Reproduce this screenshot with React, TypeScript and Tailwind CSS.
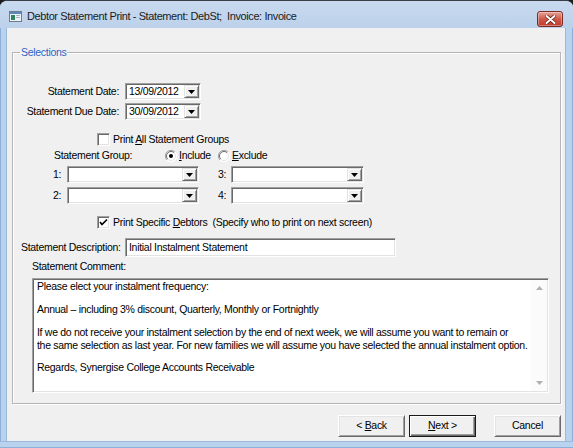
import React from 'react';

const Arrow = () => (
  <svg width="7" height="4" viewBox="0 0 7 4">
    <path d="M0 0h7L3.5 4z" fill="#000" />
  </svg>
);

const DropButton = () => (
  <div className="flex w-[15px] shrink-0 items-center justify-center border border-t-[#e3e3e3] border-l-[#e3e3e3] border-b-[#696969] border-r-[#696969] bg-[#f0f0f0] shadow-[inset_1px_1px_0_#fff,inset_-1px_-1px_0_#a0a0a0]">
    <Arrow />
  </div>
);

const Sunken: React.FC<{ className?: string; children?: React.ReactNode }> = ({ className = '', children }) => (
  <div
    className={`flex border border-t-[#a0a0a0] border-l-[#a0a0a0] border-b-white border-r-white bg-white p-[1px] shadow-[inset_1px_1px_0_#696969,inset_-1px_-1px_0_#e3e3e3] ${className}`}
  >
    {children}
  </div>
);

const Combo: React.FC<{ className?: string; value?: string }> = ({ className = '', value = '' }) => (
  <Sunken className={`h-[17px] ${className}`}>
    <span className="flex-1 pl-[2px] leading-[13px]">{value}</span>
    <DropButton />
  </Sunken>
);

const CheckBox: React.FC<{ checked?: boolean }> = ({ checked }) => (
  <Sunken className="h-[13px] w-[13px] shrink-0 items-center justify-center p-0">
    {checked && (
      <svg width="9" height="9" viewBox="0 0 9 9">
        <path d="M1 4l2 2.5L8 1.5" stroke="#000" strokeWidth="1.6" fill="none" />
      </svg>
    )}
  </Sunken>
);

const Radio: React.FC<{ checked?: boolean }> = ({ checked }) => (
  <svg width="12" height="12" viewBox="0 0 12 12" className="shrink-0">
    <circle cx="6" cy="6" r="5.5" fill="#fff" />
    <path d="M10 2A5.5 5.5 0 0 0 2 10" stroke="#a0a0a0" strokeWidth="1" fill="none" />
    <path d="M9.2 2.8A4.5 4.5 0 0 0 2.8 9.2" stroke="#696969" strokeWidth="1" fill="none" />
    <path d="M2 10A5.5 5.5 0 0 0 10 2" stroke="#fff" strokeWidth="1" fill="none" />
    <path d="M2.8 9.2A4.5 4.5 0 0 0 9.2 2.8" stroke="#e3e3e3" strokeWidth="1" fill="none" />
    {checked && <circle cx="6" cy="6" r="2" fill="#000" />}
  </svg>
);

const Button: React.FC<{ children: React.ReactNode; isDefault?: boolean; className?: string }> = ({
  children,
  isDefault,
  className = '',
}) => (
  <div
    className={`flex h-[22px] w-[67px] items-center justify-center bg-[#f0f0f0] ${
      isDefault
        ? 'border border-[#1a1a1a] shadow-[inset_1px_1px_0_#fff,inset_-1px_-1px_0_#696969,inset_-2px_-2px_0_#a0a0a0]'
        : 'border border-t-white border-l-white border-b-[#696969] border-r-[#696969] shadow-[inset_1px_1px_0_#e3e3e3,inset_-1px_-1px_0_#a0a0a0]'
    } ${className}`}
  >
    {children}
  </div>
);

const WindowIcon = () => (
  <svg width="13" height="11" viewBox="0 0 13 11">
    <rect x="0.5" y="0.5" width="12" height="10" fill="#eef2f6" stroke="#6d7d8e" />
    <rect x="1" y="1" width="11" height="2" fill="#5f87b8" />
    <rect x="2" y="4" width="4" height="5" fill="#2f8560" />
    <rect x="7" y="4" width="4" height="1" fill="#a8b4c0" />
    <rect x="7" y="6" width="4" height="1" fill="#a8b4c0" />
  </svg>
);

const CloseButton = () => (
  <div className="mr-[10px] mt-[10px] flex h-[16px] w-[26px] items-center justify-center self-start rounded-[3px] border border-[#7d2a22] bg-gradient-to-b from-[#e4a297] via-[#cf5a4a] to-[#bd3a2a] shadow-[inset_0_0_0_1px_rgba(255,255,255,0.35)]">
    <svg width="11" height="9" viewBox="0 0 11 9">
      <path d="M1.5 1l8 7M9.5 1l-8 7" stroke="#5a1a12" strokeWidth="3.4" strokeLinecap="round" />
      <path d="M1.5 1l8 7M9.5 1l-8 7" stroke="#fff" strokeWidth="2" strokeLinecap="round" />
    </svg>
  </div>
);

export default function App() {
  return (
    <div className="h-[448px] w-[573px] overflow-hidden whitespace-nowrap bg-[#1c1c1c] font-['Liberation_Sans',Arial,sans-serif] text-[10.5px] tracking-[-0.3px] text-black">
      <div className="flex h-full w-full flex-col overflow-hidden rounded-t-[7px] border-t border-[#3b3f45] bg-[#b6cde9]">
        {/* title bar */}
        <div className="flex h-[27px] shrink-0 bg-gradient-to-b from-[#c9daef] to-[#bcd1ea]">
          <div className="flex flex-1 items-center gap-[5px] pl-[9px] pt-[3px]">
            <WindowIcon />
            <span className="text-[11px] tracking-[-0.4px] text-[#1b1b1b]">
              Debtor Statement Print - Statement: DebSt;&nbsp; Invoice: Invoice
            </span>
          </div>
          <CloseButton />
        </div>

        <div className="flex flex-1">
          <div className="w-[7px] border-l border-r border-l-[#8eb0d8] border-r-[#9cb9dc] bg-[#b9d2ee]" />

          {/* client area */}
          <div className="flex flex-1 flex-col bg-[#f0f0f0] pl-[5px] pr-[4px] pt-[18px]">
            <fieldset className="border border-[#b5b5b5] pb-[10px] shadow-[inset_1px_1px_0_#fff,1px_1px_0_#fff]">
              <legend className="ml-[7px] px-[1px] leading-[12px] text-[#2a63c6]">Selections</legend>

              <div className="mt-[25px] flex h-[17px] items-center">
                <span className="w-[106px] text-right">Statement Date:</span>
                <Combo className="ml-[6px] w-[76px]" value="13/09/2012" />
              </div>
              <div className="mt-[3px] flex h-[17px] items-center">
                <span className="w-[106px] text-right">Statement Due Date:</span>
                <Combo className="ml-[6px] w-[76px]" value="30/09/2012" />
              </div>

              <div className="mt-[13px] flex h-[13px] items-center pl-[84px]">
                <CheckBox />
                <span className="ml-[3px]">
                  Print <u>A</u>ll Statement Groups
                </span>
              </div>

              <div className="mt-[4px] flex h-[12px] items-center pl-[41px]">
                <span className="w-[111px]">Statement Group:</span>
                <Radio checked />
                <span className="ml-[2px] w-[39px]">
                  <u>I</u>nclude
                </span>
                <Radio />
                <span className="ml-[2px]">
                  <u>E</u>xclude
                </span>
              </div>

              <div className="mt-[4px] flex h-[17px] items-center pl-[40px]">
                <span className="w-[14px]">1:</span>
                <Combo className="w-[132px]" />
                <span className="ml-[19px] w-[13px]">3:</span>
                <Combo className="w-[133px]" />
              </div>
              <div className="mt-[4px] flex h-[17px] items-center pl-[40px]">
                <span className="w-[14px]">2:</span>
                <Combo className="w-[132px]" />
                <span className="ml-[19px] w-[13px]">4:</span>
                <Combo className="w-[133px]" />
              </div>

              <div className="mt-[12px] flex h-[13px] items-center pl-[84px]">
                <CheckBox checked />
                <span className="ml-[3px] whitespace-pre">
                  Print Specific <u>D</u>ebtors  (Specify who to print on next screen)
                </span>
              </div>

              <div className="mt-[9px] flex h-[19px] items-center pl-[8px]">
                <span className="w-[104px]">Statement Description:</span>
                <Sunken className="h-[19px] w-[271px] items-center">
                  <span className="pl-[2px]">Initial Instalment Statement</span>
                </Sunken>
              </div>

              <div className="mt-[4px] flex h-[12px] items-center pl-[19px]">
                <span>Statement Comment:</span>
              </div>

              <div className="mt-[5px] pl-[19px]">
                <Sunken className="h-[115px] w-[517px]">
                  <div className="flex-1 overflow-hidden pl-[3px] leading-[13px]">
                    <div>Please elect your instalment frequency:</div>
                    <div className="h-[10px]" />
                    <div>Annual – including 3% discount, Quarterly, Monthly or Fortnightly</div>
                    <div className="h-[10px]" />
                    <div>If we do not receive your instalment selection by the end of next week, we will assume you want to remain or</div>
                    <div>the same selection as last year. For new families we will assume you have selected the annual instalment option.</div>
                    <div className="h-[9px]" />
                    <div>Regards, Synergise College Accounts Receivable</div>
                  </div>
                  <div className="flex w-[16px] shrink-0 flex-col items-center justify-between bg-[#fbfbfb] py-[6px]">
                    <svg width="7" height="4" viewBox="0 0 7 4">
                      <path d="M0 4h7L3.5 0z" fill="#b0b0b0" />
                    </svg>
                    <svg width="7" height="4" viewBox="0 0 7 4">
                      <path d="M0 0h7L3.5 4z" fill="#b0b0b0" />
                    </svg>
                  </div>
                </Sunken>
              </div>
            </fieldset>

            <div className="mt-[11px] flex justify-end">
              <Button>
                &lt;&nbsp;<u>B</u>ack
              </Button>
              <Button isDefault className="ml-[4px]">
                <u>N</u>ext&nbsp;&gt;
              </Button>
              <Button className="ml-[18px]">Cancel</Button>
            </div>
          </div>

          <div className="w-[8px] border-l border-r border-l-[#9cb9dc] border-r-[#8eb0d8] bg-[#b9d2ee]" />
        </div>
        <div className="h-[7px] shrink-0 border-b border-t border-b-[#8eb0d8] border-t-[#9cb9dc] bg-[#b9d2ee]" />
      </div>
    </div>
  );
}
